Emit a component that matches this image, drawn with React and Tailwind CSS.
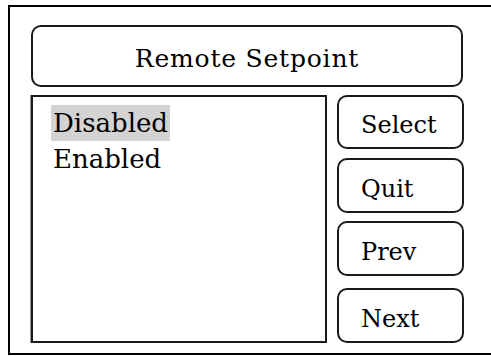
import React, { useState } from 'react'

const items = ['Disabled', 'Enabled']
const buttons = [
  { label: 'Select', cls: 'h-[54px]' },
  { label: 'Quit', cls: 'h-[55px] mt-[9px]' },
  { label: 'Prev', cls: 'h-[55px] mt-[8px]' },
  { label: 'Next', cls: 'h-[55px] mt-[12px]' },
]

export default function App() {
  const [selected, setSelected] = useState(0)

  return (
    <div className="w-[491px] h-[356px] overflow-hidden bg-white text-black font-['DejaVu_Serif',serif]">
      {/* Outer frame, runs off the right edge */}
      <div className="ml-[8px] mt-[5px] w-[520px] shrink-0 h-[350px] border-2 border-black pl-[21px] pt-[18px]">
        {/* Title */}
        <div className="w-[432px] h-[62px] rounded-[10px] border-2 border-[#1a1a1a] flex items-center justify-center pt-[5px] text-[25px] tracking-[0.8px]">
          Remote Setpoint
        </div>

        <div className="flex mt-[8px]">
          {/* List */}
          <div className="w-[296px] h-[248px] border-2 border-[#1a1a1a] shadow-[-1px_0_0_#9a9a9a] pl-[18px] pt-[8px] text-[26px]">
            {items.map((item, i) => (
              <div
                key={item}
                onClick={() => setSelected(i)}
                className={`w-fit h-[36px] leading-[36px] px-[2px] ${selected === i ? 'bg-[#d3d3d3]' : ''}`}
              >
                {item}
              </div>
            ))}
          </div>

          {/* Buttons */}
          <div className="ml-[10px] w-[127px] flex flex-col">
            {buttons.map((b) => (
              <button
                key={b.label}
                className={`${b.cls} w-full rounded-[10px] border-2 border-[#1a1a1a] flex items-center pl-[22px] pt-[6px] text-[24px] bg-white`}
              >
                {b.label}
              </button>
            ))}
          </div>
        </div>
      </div>
    </div>
  )
}
